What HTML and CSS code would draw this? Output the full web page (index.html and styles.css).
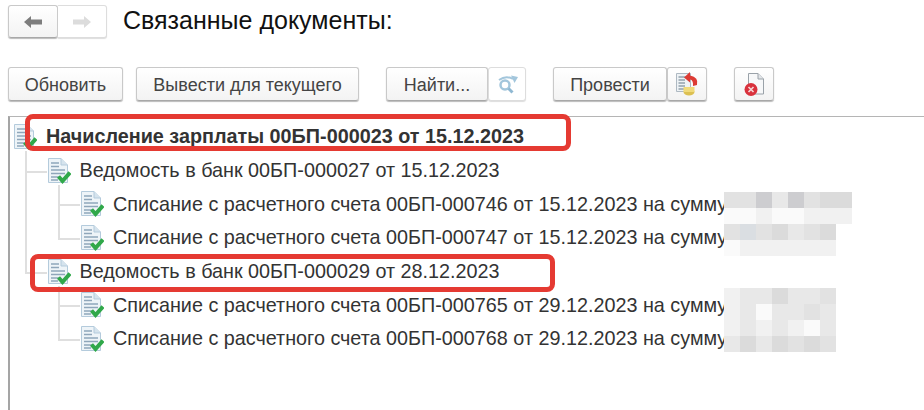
FILE: index.html
```html
<!DOCTYPE html>
<html lang="ru">
<head>
	<meta charset="UTF-8">
	<title>Связанные документы</title>
	<link rel="stylesheet" href="styles.css">
</head>
<body>
	<svg class="defs" width="0" height="0">
		<symbol id="doc" viewBox="0 0 24 28">
			<path d="M1.500 1.500H14L20.500 8V25.500H1.500Z" fill="#eef4f8" stroke="#b4cbdc"/>
			<path d="M14 1.500V8H20.500" fill="#d5e3ed" stroke="#b4cbdc"/>
			<path d="M4 6H12M4 9.500H12M4 13H18M4 16.500H18M4 20H12M4 23H11" stroke="#8fa6ba" stroke-width="1.500"/>
			<path d="M11.500 19.500L15.500 24L23 15.500" fill="none" stroke="#30a84a" stroke-width="4"/>
		</symbol>
	</svg>

	<!-- HEADER -->
	<header class="header">
		<div class="group">
			<button class="btn nav-btn"><svg width="20" height="14" viewBox="0 0 20 14"><path d="M8 1L1 7L8 13V9.500H19V4.500H8Z" fill="#7d7d7d"/></svg></button>
			<button class="btn nav-btn off"><svg width="20" height="14" viewBox="0 0 20 14"><path d="M12 1L19 7L12 13V9.500H1V4.500H12Z" fill="#dcdcdc"/></svg></button>
		</div>
		<h1 class="title">Связанные документы:</h1>
	</header>

	<!-- TOOLBAR -->
	<div class="toolbar">
		<button class="btn text-btn w-refresh">Обновить</button>
		<button class="btn text-btn w-output">Вывести для текущего</button>
		<div class="group sep-left">
			<button class="btn text-btn w-find">Найти...</button>
			<button class="btn icon-btn off w-repeat">
				<svg width="26" height="20" viewBox="0 0 26 20">
					<circle cx="11" cy="11" r="4.500" fill="none" stroke="#a3c6dc" stroke-width="2.500"/>
					<path d="M14.500 14.500L18.500 18.500" stroke="#8fb8d2" stroke-width="3"/>
					<path d="M5 6Q12 1 19 5" fill="none" stroke="#a3c6dc" stroke-width="2"/>
					<path d="M17 1.500L24 3L20.500 9Z" fill="#a3c6dc"/>
				</svg>
			</button>
		</div>
		<div class="group sep-left">
			<button class="btn text-btn w-post">Провести</button>
			<button class="btn icon-btn w-unpost">
				<svg width="24" height="24" viewBox="0 0 24 24">
					<path d="M1.500 1.500H15.500V19.500H1.500Z" fill="#eef2f5" stroke="#aeb9c2"/>
					<path d="M3.500 5H13.500M3.500 8H10M3.500 11H10M3.500 14H10M3.500 17H10" stroke="#93a1ac" stroke-width="1.300"/>
					<ellipse cx="14" cy="20" rx="5.500" ry="3.500" fill="#dcc052"/>
					<path d="M8.500 15H19.500V20H8.500Z" fill="#f0da7a"/>
					<path d="M15 0L9 5.500L15 10.500V7.500Q18.500 8 18 14L22 13Q24 5 15 3.500Z" fill="#dd3b34"/>
				</svg>
			</button>
		</div>
		<button class="btn icon-btn sep-left w-delete">
			<svg width="24" height="26" viewBox="0 0 24 26">
				<path d="M6.500 2.500H16L21.500 8V23H6.500Z" fill="#f7f8f9" stroke="#9aa2a9"/>
				<path d="M16 2.500V8H21.500" fill="#e2e5e8" stroke="#9aa2a9"/>
				<circle cx="9" cy="18.500" r="6.500" fill="#d9323d"/>
				<path d="M6.500 16L11.500 21M11.500 16L6.500 21" stroke="#f6d5d5" stroke-width="1.700"/>
			</svg>
		</button>
	</div>

	<!-- TREE -->
	<main class="tree-box">
		<ul class="tree">
			<li>
				<div class="row"><svg class="doc"><use href="#doc"/></svg><b>Начисление зарплаты 00БП-000023 от 15.12.2023</b></div>
				<ul>
					<li>
						<div class="row"><svg class="doc"><use href="#doc"/></svg>Ведомость в банк 00БП-000027 от 15.12.2023</div>
						<ul>
							<li><div class="row"><svg class="doc"><use href="#doc"/></svg>Списание с расчетного счета 00БП-000746 от 15.12.2023 на сумму</div></li>
							<li><div class="row"><svg class="doc"><use href="#doc"/></svg>Списание с расчетного счета 00БП-000747 от 15.12.2023 на сумму</div></li>
						</ul>
					</li>
					<li>
						<div class="row"><svg class="doc"><use href="#doc"/></svg>Ведомость в банк 00БП-000029 от 28.12.2023</div>
						<ul>
							<li><div class="row"><svg class="doc"><use href="#doc"/></svg>Списание с расчетного счета 00БП-000765 от 29.12.2023 на сумму</div></li>
							<li><div class="row"><svg class="doc"><use href="#doc"/></svg>Списание с расчетного счета 00БП-000768 от 29.12.2023 на сумму</div></li>
						</ul>
					</li>
				</ul>
			</li>
		</ul>

		<!-- blurred sums -->
		<div class="blur blur-top">
			<i class="g3"></i><i class="g3"></i><i class="g6"></i><i class="g2"></i><i class="g6"></i><i class="g3"></i><i class="g4"></i><i class="g4"></i>
			<i class="g0"></i><i class="g0"></i><i class="g1"></i><i class="g0"></i><i class="g0"></i><i class="g1"></i><i class="g1"></i><i class="g1"></i>
			<i class="g3"></i><i class="g5"></i><i class="g3"></i><i class="g4"></i><i class="g2"></i><i class="g3"></i><i class="g4"></i><i></i>
			<i class="g0"></i><i class="g1"></i><i class="g1"></i><i class="g1"></i><i class="g1"></i><i class="g1"></i><i class="g1"></i><i></i>
		</div>
		<div class="blur blur-bottom">
			<i class="g1"></i><i class="g2"></i><i class="g2"></i><i class="g4"></i><i class="g2"></i><i class="g2"></i><i class="g3"></i>
			<i class="g1"></i><i class="g2"></i><i class="g0"></i><i class="g2"></i><i class="g2"></i><i class="g3"></i><i class="g2"></i>
			<i class="g1"></i><i class="g2"></i><i class="g1"></i><i class="g2"></i><i class="g1"></i><i class="g0"></i><i class="g2"></i>
			<i class="g2"></i><i class="g4"></i><i class="g2"></i><i class="g4"></i><i class="g3"></i><i class="g4"></i><i class="g3"></i>
		</div>

		<!-- red marks over the screenshot -->
		<div class="mark mark-top"></div>
		<div class="mark mark-bottom"></div>
	</main>
</body>
</html>
```

FILE: styles.css
```css
* {
	margin: 0;
	padding: 0;
	box-sizing: border-box;
}

body {
	width: 924px;
	height: 410px;
	overflow: hidden;
	background: #fff;
	color: #333;
	font-family: "Liberation Sans", Arial, sans-serif;
	padding: 5px 0 0 8px;
}

.defs {
	position: absolute;
}

/* HEADER */
.header {
	display: flex;
	align-items: center;
	gap: 16px;
	height: 33px;
}

.title {
	font-size: 25px;
	font-weight: normal;
	color: #111;
	margin-top: -2px;
}

.group {
	display: flex;
}

/* BUTTONS */
.btn {
	display: flex;
	align-items: center;
	justify-content: center;
	height: 34px;
	border: 1px solid #c9c9c9;
	border-bottom-color: #a8a8a8;
	border-radius: 3px;
	background: linear-gradient(#fff, #f3f3f3);
	box-shadow: 0 1px 1px #bbb;
	color: #444;
	font-family: inherit;
	font-size: 18px;
}

.text-btn {
	padding-top: 2px;
}

.nav-btn {
	width: 50px;
	height: 33px;
}

.nav-btn.off {
	width: 49px;
	border-left: 0;
	border-radius: 0 3px 3px 0;
}

.off {
	background: #fff;
	box-shadow: 0 1px 1px #ddd;
	border-color: #ddd;
}

.w-refresh { width: 115px; }
.w-output { width: 223px; }
.w-find { width: 102px; }
.w-repeat { width: 38px; }
.w-post { width: 114px; }
.w-unpost { width: 40px; }
.w-delete { width: 40px; }

/* TOOLBAR */
.toolbar {
	display: flex;
	gap: 13px;
	margin-top: 29px;
}

.sep-left {
	margin-left: 14px;
}

/* TREE */
.tree-box {
	position: relative;
	height: 300px;
	margin-top: 15px;
	border-top: 1px solid #b5b5b5;
	border-left: 2px solid #a5a5a5;
	margin-right: -8px;
	font-size: 19.800px;
}

.tree-box ul {
	list-style: none;
}

.tree {
	padding: 3px 0 0 3px;
}

.tree ul {
	margin-left: 33.500px;
}

.tree ul li {
	position: relative;
}

/* connector to the parent row */
.tree ul li::before {
	content: "";
	position: absolute;
	left: -22px;
	top: -17px;
	width: 20px;
	height: 34px;
	border-left: 2px solid #dfdfdf;
	border-bottom: 2px solid #dfdfdf;
}

.tree ul li:not(:last-child)::after {
	content: "";
	position: absolute;
	left: -22px;
	top: 0;
	bottom: 0;
	border-left: 2px solid #dfdfdf;
}

.row {
	display: flex;
	align-items: center;
	gap: 9px;
	height: 33.700px;
	white-space: nowrap;
}

.doc {
	position: relative;
	z-index: 1;
	width: 24px;
	height: 28px;
	flex: none;
	background: #fff;
}

/* blurred sums */
.blur {
	position: absolute;
	left: 714px;
	display: grid;
	grid-template-columns: repeat(8, 16px);
	grid-auto-rows: 16px;
}

.blur-top { top: 75px; }
.blur-bottom { top: 171px; grid-template-columns: repeat(7, 16px); }

.blur i {
	background: #fff;
}

.blur .g0 { background: #fafafa; }
.blur .g1 { background: #f1f1f1; }
.blur .g2 { background: #e8e8e8; }
.blur .g3 { background: #e2e2e2; }
.blur .g4 { background: #dbdbdb; }
.blur .g5 { background: #dadee2; }
.blur .g6 { background: #cdcdd0; }

/* red marks */
.mark {
	position: absolute;
	z-index: 2;
	border: 5px solid #e53a32;
	border-radius: 8px;
}

.mark-top {
	left: 15px;
	top: -3px;
	width: 546px;
	height: 37px;
}

.mark-bottom {
	left: 20px;
	top: 137px;
	width: 525px;
	height: 38px;
}
```
